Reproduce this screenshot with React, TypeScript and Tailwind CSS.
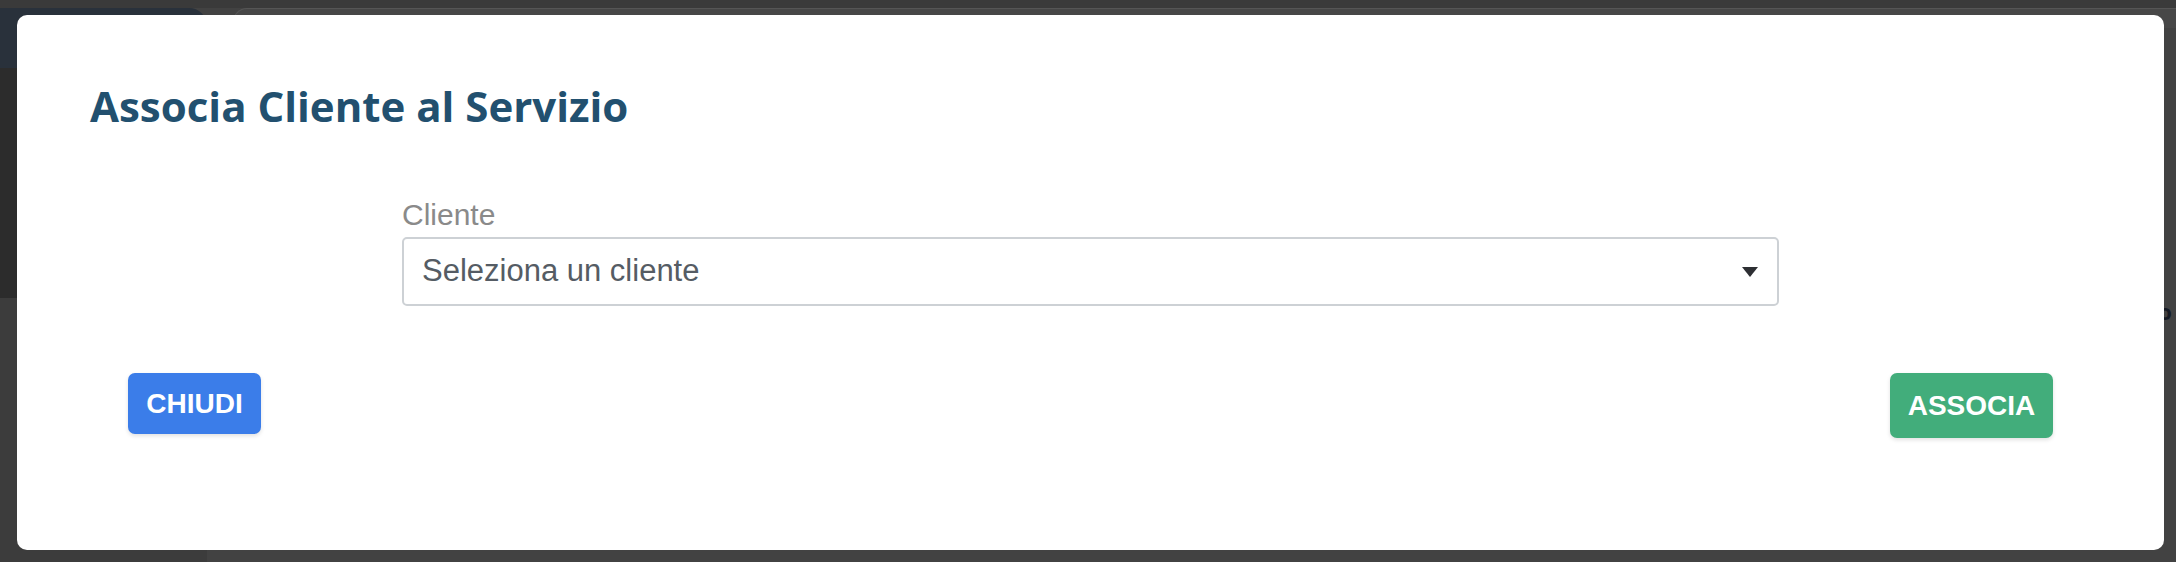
import { useState } from "react";

const clienti = ["Seleziona un cliente", "Mario Rossi", "Giulia Bianchi", "Luca Verdi"];

function BackgroundPage() {
  return (
    <div className="flex h-full w-full flex-col bg-[#424242]">
      <div className="h-[8px] bg-[#3a3a3a]" />
      <div className="flex flex-1">
        <div className="flex w-[207px] flex-col">
          <div className="h-[60px] rounded-tr-[18px] bg-[#29313b]" />
          <div className="h-[230px] bg-[#2c2c2c]" />
          <div className="flex-1 bg-[#3c3c3c]" />
        </div>
        <div className="flex flex-1 flex-col pl-[26px]">
          <div className="h-[20px] rounded-tl-[14px] border-l border-t border-[#555] bg-[#474747]" />
          <div className="flex justify-end pt-[272px] pr-[4px]">
            <span className="font-['Open_Sans',sans-serif] text-[22px] font-bold leading-none text-[#161a24]">
              Servizio
            </span>
          </div>
        </div>
      </div>
    </div>
  );
}

function AssociaClienteModal() {
  const [cliente, setCliente] = useState(clienti[0]);

  return (
    <div className="absolute left-[17px] top-[15px] h-[535px] w-[2147px] rounded-[10px] bg-white px-[73px] pt-[66px]">
      <h2 className="font-['Open_Sans',sans-serif] text-[42px] font-bold leading-[50px] text-[#22506f]">
        Associa Cliente al Servizio
      </h2>

      <div className="mx-auto mt-[68px] w-[1377px] font-['Liberation_Sans',Arial,sans-serif]">
        <label className="block text-[30px] leading-[32px] text-[#8a8a8a]">Cliente</label>
        <div className="relative mt-[6px]">
          <select
            value={cliente}
            onChange={(e) => setCliente(e.target.value)}
            className="h-[69px] w-full appearance-none rounded-[5px] border-2 border-[#cdd1d5] bg-white pl-[18px] text-[31px] text-[#555c64] outline-none"
          >
            {clienti.map((c) => (
              <option key={c}>{c}</option>
            ))}
          </select>
          <svg
            className="pointer-events-none absolute right-[21px] top-[30px]"
            width="16"
            height="10"
            viewBox="0 0 16 10"
          >
            <path d="M0 0h16L8 10z" fill="#2d2f33" />
          </svg>
        </div>
      </div>

      <div className="mt-[67px] flex items-start justify-between px-[38px] font-['Liberation_Sans',Arial,sans-serif]">
        <button className="h-[61px] w-[133px] rounded-[7px] bg-[#3b7de9] text-[28px] font-bold text-white shadow-[0_2px_4px_rgba(0,0,0,0.12)]">
          CHIUDI
        </button>
        <button className="h-[65px] w-[163px] rounded-[7px] bg-[#42ad7b] text-[28px] font-bold text-white shadow-[0_2px_4px_rgba(0,0,0,0.12)]">
          ASSOCIA
        </button>
      </div>
    </div>
  );
}

export default function App() {
  return (
    <div className="relative h-[562px] w-[2176px] overflow-hidden">
      <BackgroundPage />
      <AssociaClienteModal />
    </div>
  );
}
